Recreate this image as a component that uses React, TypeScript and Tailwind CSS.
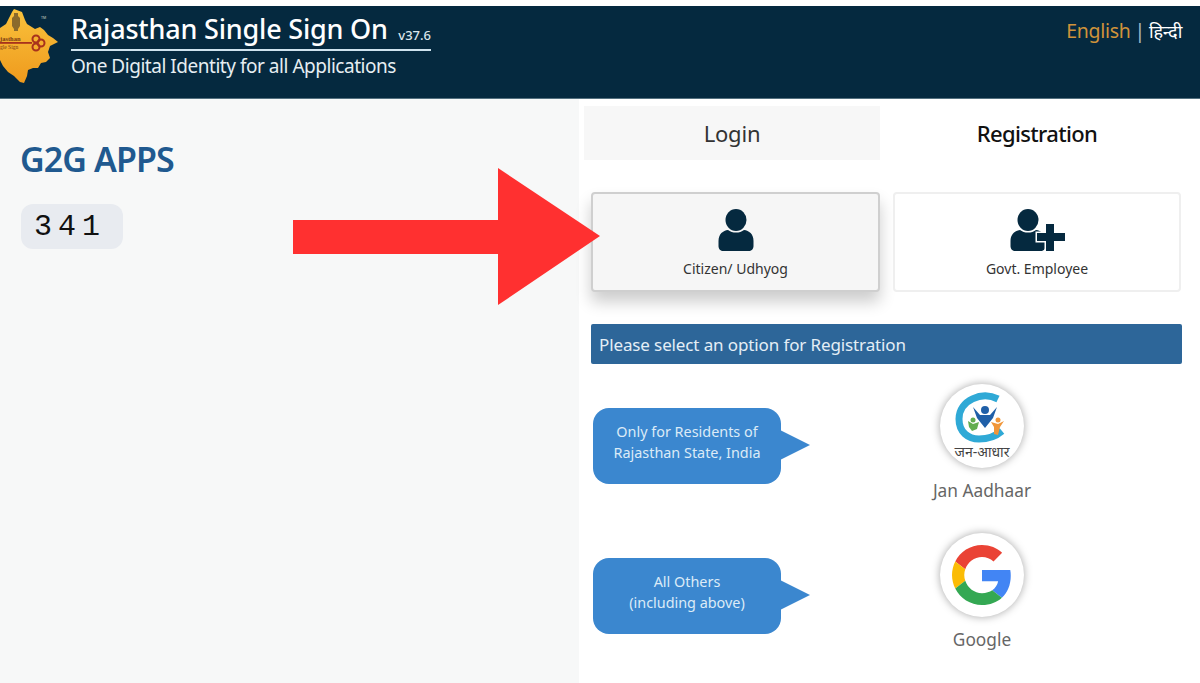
const font = "font-['Noto_Sans','Noto_Sans_CJK_SC',sans-serif]";

function StateLogo() {
  return (
    <svg viewBox="0 0 60 84" className="h-[84px] w-[60px] shrink-0" aria-hidden>
      <defs>
        <linearGradient id="gold" x1="0" y1="0" x2="0" y2="1">
          <stop offset="0" stopColor="#f9c23c" />
          <stop offset="1" stopColor="#ef9a1d" />
        </linearGradient>
      </defs>
      <path
        d="M14 3l8 3 3 8 2 4 8 5 5-2 4 3 4 5 5 3 5 4-8 4-2 6 2 6-4 4-5 1-3 5-5 0-5 2-1 6-3 7-4-1-6-6-6-4-5-6-3-6V22l6-4 3-6 3-6z"
        fill="url(#gold)"
      />
      <path d="M14 7h4v3l2 2v8l-2 3v2h-4v-2l-2-3v-8l2-2z" fill="#8a6a2c" />
      <text x="41" y="13" fontSize="3.500" fill="#cfd8c8" fontFamily="Noto Sans, sans-serif">TM</text>
      <circle cx="36" cy="33" r="3.500" fill="none" stroke="#a8321c" strokeWidth="2" />
      <circle cx="36" cy="41" r="3.500" fill="none" stroke="#a8321c" strokeWidth="2" />
      <circle cx="41" cy="37" r="3.500" fill="none" stroke="#a8321c" strokeWidth="2" />
      <rect x="0" y="36" width="32" height="1.800" fill="#a8321c" />
      <text x="0" y="35" fontSize="6.500" fontWeight="700" fill="#7c3a12" fontFamily="Liberation Serif">jasthan</text>
      <text x="0" y="43" fontSize="5.500" fill="#7c3a12" fontFamily="Liberation Serif">gle Sign</text>
    </svg>
  );
}

function PersonIcon() {
  return (
    <svg viewBox="0 0 36 42" className="h-[42px] w-[36px]" aria-hidden>
      <ellipse cx="18" cy="11" rx="10.500" ry="11" fill="#05293f" />
      <path d="M10 21c4 3.400 12 3.400 16 0 5 .6 9.500 4 9.500 11v5c0 3-2 5-5 5h-25c-3 0-5-2-5-5v-5c0-7 4.500-10.400 9.500-11z" fill="#05293f" />
    </svg>
  );
}

function PersonPlusIcon() {
  return (
    <svg viewBox="0 0 56 42" className="h-[42px] w-[56px]" aria-hidden>
      <ellipse cx="18" cy="11" rx="10.500" ry="11" fill="#05293f" />
      <path d="M10 21c4 3.400 12 3.400 16 0 5 .6 9.500 4 9.500 11v5c0 3-2 5-5 5h-25c-3 0-5-2-5-5v-5c0-7 4.500-10.400 9.500-11z" fill="#05293f" />
      <path d="M36 15h8v9h11v8H44v10h-8V32h-9v-8h9z" fill="#05293f" stroke="#fff" strokeWidth="3" paintOrder="stroke" />
    </svg>
  );
}

function JanAadhaarLogo() {
  return (
    <svg viewBox="0 0 80 80" className="h-[80px] w-[80px]" aria-hidden>
      <path d="M56 13C40 5 17 14 17 33c0 13 9 20 20 20 8 0 16-2 23-8" fill="none" stroke="#2fa9d6" strokeWidth="7" />
      <circle cx="43" cy="24" r="4" fill="#1f5fa8" />
      <path d="M31 21l7 8h10l7-8-4 11-8 10-8-10z" fill="#1f5fa8" />
      <circle cx="31" cy="34" r="2.500" fill="#62ad4f" />
      <path d="M26 35l5 3 6-2-2 7-5 2-3-4z" fill="#62ad4f" />
      <circle cx="56" cy="34" r="2.500" fill="#f0963a" />
      <path d="M49 36l7 2 6-3-4 6-2 8-4-1 0-7z" fill="#f0963a" />
      <text x="40" y="71" textAnchor="middle" fontSize="14" fill="#444" fontFamily="Noto Sans, sans-serif">जन-आधार</text>
    </svg>
  );
}

function GoogleLogo() {
  return (
    <svg viewBox="0 0 48 48" className="h-[60px] w-[60px]" aria-hidden>
      <path fill="#ea4335" d="M24 9.500c3.500 0 6.700 1.200 9.200 3.600l6.900-6.900C35.900 2.400 30.500 0 24 0 14.600 0 6.500 5.400 2.600 13.200l8 6.200C12.500 13.600 17.800 9.500 24 9.500z" />
      <path fill="#4285f4" d="M47 24.500c0-1.600-.1-3.100-.4-4.500H24v9h12.900c-.6 3-2.200 5.500-4.700 7.200l7.700 6c4.500-4.200 7.100-10.300 7.100-17.700z" />
      <path fill="#fbbc05" d="M10.600 28.600c-.5-1.500-.8-3-.8-4.600s.3-3.100.8-4.600l-8-6.200C1 16.400 0 20.100 0 24s1 7.600 2.600 10.800z" />
      <path fill="#34a853" d="M24 48c6.500 0 11.900-2.100 15.900-5.800l-7.700-6c-2.100 1.400-4.900 2.300-8.200 2.300-6.200 0-11.500-4.100-13.400-9.900l-8 6.200C6.500 42.600 14.600 48 24 48z" />
    </svg>
  );
}

function Bubble({ lines }: { lines: string[] }) {
  return (
    <div className="relative flex h-[76px] w-[188px] flex-col items-center justify-center rounded-2xl bg-[#3b87cf] pb-2 text-[14.4px] leading-[21px] text-[#dcebf7]">
      {lines.map((l) => (
        <span key={l}>{l}</span>
      ))}
      <span className="absolute left-[187px] top-[22px] h-0 w-0 border-y-[15px] border-l-[30px] border-y-transparent border-l-[#3b87cf]" />
    </div>
  );
}

export default function App() {
  return (
    <div className={`${font} relative flex h-[683px] w-[1200px] flex-col overflow-hidden bg-white pt-[6px]`}>
      <header className="flex h-[93px] items-start justify-between border-b border-[#54707f] bg-[#05293f]">
        <div className="flex items-start">
          <StateLogo />
          <div className="ml-[11px] mt-[4px] w-[360px]">
            <div className="flex items-end justify-between border-b-2 border-[#cfe3ee] pb-[2px] text-white">
              <span className="text-[27px] font-medium leading-[37px] tracking-[-0.2px]">Rajasthan Single Sign On</span>
              <span className="text-[13px] font-medium leading-[24px] text-[#dbe6ec]">v37.6</span>
            </div>
            <div className="mt-[1px] text-[19px] leading-[28px] tracking-[-0.47px] text-[#e6eef2]">One Digital Identity for all Applications</div>
          </div>
        </div>
        <div className="mr-[18px] mt-[11px] flex items-center text-[19.500px] leading-[28px] tracking-[-0.3px] text-white">
          <span className="text-[#d0933a]">English</span>
          <span className="mx-[4px] text-[#a8bcc8]">|</span>
          <span className="text-[18px]">हिन्दी</span>
        </div>
      </header>

      <main className="flex flex-1">
        <section className="w-[579px] bg-[#f7f8f8] pl-[20px] pt-[37px]">
          <h1 className="text-[34px] font-semibold leading-[46px] tracking-[-0.9px] text-[#20598f]">G2G APPS</h1>
          <div className="ml-[1px] mt-[22px] flex h-[45px] w-[102px] items-center rounded-xl bg-[#e8ebf0] pl-[13px] font-['Liberation_Mono',monospace] text-[30px] leading-none tracking-[6px] text-[#111]">
            341
          </div>
        </section>

        <section className="flex-1 pl-[5px] pt-[7px]">
          <div className="flex">
            <div className="flex h-[54px] w-[296px] items-center justify-center bg-[#f7f7f7] text-[22px] tracking-[-0.2px] text-[#333]">Login</div>
            <div className="flex h-[54px] w-[314px] items-center justify-center text-[22px] font-medium tracking-[-0.65px] text-[#111]">Registration</div>
          </div>

          <div className="ml-[7px] mt-[32px] flex gap-[13px]">
            <div className="flex h-[100px] w-[289px] flex-col items-center rounded border-2 border-[#cfcfcf] bg-[#f6f6f6] pt-[15px] shadow-[0_10px_16px_rgba(0,0,0,0.2)]">
              <PersonIcon />
              <div className="mt-[8px] text-[14px] leading-[20px] text-[#333]">Citizen/ Udhyog</div>
            </div>
            <div className="flex h-[100px] w-[288px] flex-col items-center rounded border-2 border-[#efefef] bg-white pt-[15px]">
              <div className="pl-[1px]">
                <PersonPlusIcon />
              </div>
              <div className="mt-[8px] text-[14px] leading-[20px] text-[#333]">Govt. Employee</div>
            </div>
          </div>

          <div className="ml-[7px] mt-[32px] flex h-[40px] w-[591px] items-center rounded-[2px] bg-[#2d6699] pl-[8px] pt-[1px] text-[17px] tracking-[-0.12px] text-[#e4eef6]">
            Please select an option for Registration
          </div>

          <div className="ml-[9px] mt-[20px] flex items-start">
            <div className="mt-[24px]">
              <Bubble lines={["Only for Residents of", "Rajasthan State, India"]} />
            </div>
            <div className="ml-[111px] flex w-[180px] flex-col items-center">
              <div className="flex h-[84px] w-[84px] items-center justify-center rounded-full bg-white shadow-[0_0_8px_rgba(0,0,0,0.35)]">
                <JanAadhaarLogo />
              </div>
              <div className="mt-[11px] text-[17.300px] leading-[24px] text-[#666]">Jan Aadhaar</div>
            </div>
          </div>

          <div className="ml-[9px] mt-[30px] flex items-start">
            <div className="mt-[25px]">
              <Bubble lines={["All Others", "(including above)"]} />
            </div>
            <div className="ml-[111px] flex w-[180px] flex-col items-center">
              <div className="flex h-[84px] w-[84px] items-center justify-center rounded-full bg-white shadow-[0_0_8px_rgba(0,0,0,0.35)]">
                <GoogleLogo />
              </div>
              <div className="mt-[11px] text-[17.300px] leading-[24px] text-[#666]">Google</div>
            </div>
          </div>
        </section>
      </main>

      {/* annotation arrow drawn over the page */}
      <svg viewBox="0 0 310 140" className="absolute left-[292px] top-[167px] h-[140px] w-[310px]" aria-hidden>
        <path d="M1 53h205V1l102 68-102 69V87H1z" fill="#ff3030" />
      </svg>
    </div>
  );
}
